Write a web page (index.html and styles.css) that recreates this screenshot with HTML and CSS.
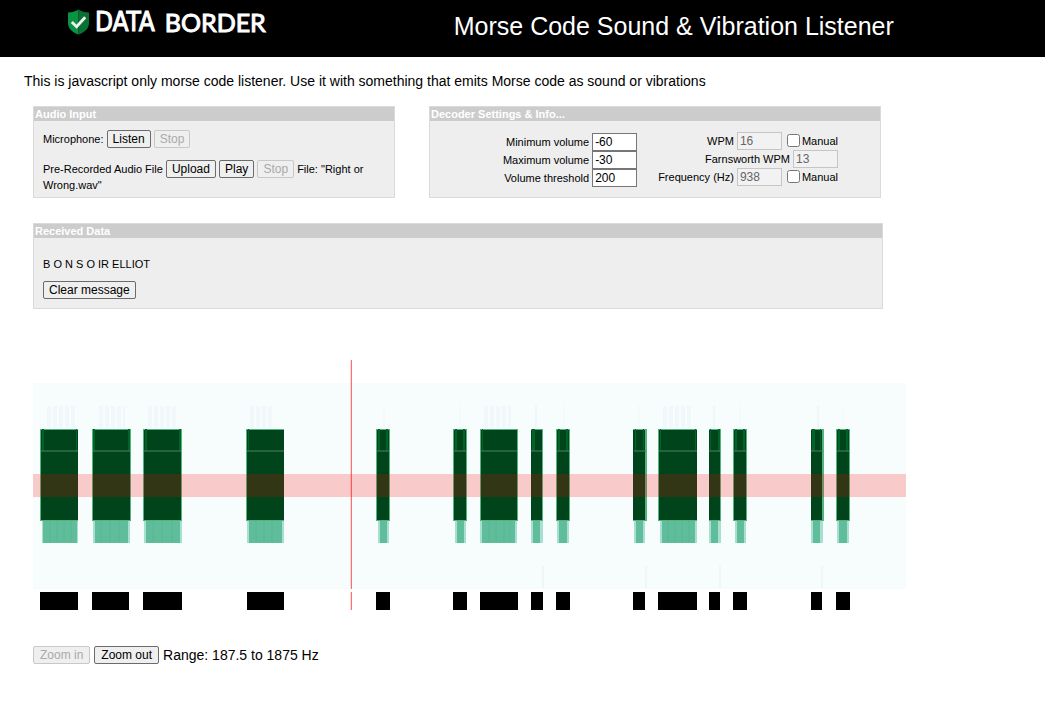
FILE: index.html
```html
<!DOCTYPE html>
<html lang="en">
<head>
<meta charset="utf-8">
<title>Morse Code Sound &amp; Vibration Listener</title>
<link rel="stylesheet" href="styles.css">
</head>
<body>
<header class="site-header">
  <a class="logo" href="#">
    <svg class="shield" viewBox="0 0 22 26" aria-hidden="true">
      <path d="M11 0C8 2 4 3 0 3V14C0 20 5 24 11 26Z" fill="#0b9344"/>
      <path d="M11 0C14 2 18 3 22 3V14C22 20 17 24 11 26Z" fill="#077332"/>
      <path d="M4 13L9 18L18 8" fill="none" stroke="#f2f2f2" stroke-width="3"/>
    </svg>
    <span class="logo-data">DATA</span>
    <span class="logo-border">BORDER</span>
  </a>
  <h1 class="page-title">Morse Code Sound &amp; Vibration Listener</h1>
</header>

<main class="content">
  <p class="intro">This is javascript only morse code listener. Use it with something that emits Morse code as sound or vibrations</p>

  <div class="workspace">
    <div class="panels">
      <section class="panel">
        <h2 class="panel-title">Audio Input</h2>
        <div class="panel-body audio">
          <p>Microphone: <button>Listen</button> <button disabled>Stop</button></p>
          <p>Pre-Recorded Audio File <button>Upload</button> <button>Play</button> <button disabled>Stop</button> File: "Right or Wrong.wav"</p>
        </div>
      </section>

      <section class="panel">
        <h2 class="panel-title">Decoder Settings &amp; Info...</h2>
        <div class="panel-body settings">
          <div class="fields">
            <div class="field"><label for="vmin">Minimum volume</label><input class="num" id="vmin" value="-60"></div>
            <div class="field"><label for="vmax">Maximum volume</label><input class="num" id="vmax" value="-30"></div>
            <div class="field"><label for="vthr">Volume threshold</label><input class="num" id="vthr" value="200"></div>
          </div>
          <div class="fields speed">
            <div class="field"><label for="wpm">WPM</label><input class="num" id="wpm" value="16" disabled><input class="tick" type="checkbox" id="wpm-m"><label for="wpm-m">Manual</label></div>
            <div class="field"><label for="fwpm">Farnsworth WPM</label><input class="num" id="fwpm" value="13" disabled></div>
            <div class="field"><label for="freq">Frequency (Hz)</label><input class="num" id="freq" value="938" disabled><input class="tick" type="checkbox" id="freq-m"><label for="freq-m">Manual</label></div>
          </div>
        </div>
      </section>
    </div>

    <section class="panel">
      <h2 class="panel-title">Received Data</h2>
      <div class="panel-body received">
        <p>B O N S O IR ELLIOT</p>
        <button>Clear message</button>
      </div>
    </section>

    <svg class="spectrogram" viewBox="0 0 873 250" role="img" aria-label="Spectrogram of the decoded audio">
      <rect class="backdrop" y="23" width="873" height="206"/>
      <path class="haze" d="M14 57h28M66 57h26M115 57h30M217 57h24M451 57h27M630 57h30"/>
      <path class="blip" d="M503 46v22M681 46v22M785 46v22M510 206v22M613 206v22M687 206v22M789 206v22"/>
      <path class="blip-faint" d="M351 46v22M427 46v22M531 46v22M606 46v22M707 46v22M810 46v22"/>
      <path class="tail-edge" d="M9 171h36M60 171h37M111 171h38M214 171h37M345 171h11M422 171h11M447 171h37M498 171h12M524 171h12M601 171h11M627 171h37M676 171h12M702 171h11M778 171h12M804 171h12"/>
      <path class="tail" d="M10 171h34M62 171h33M113 171h34M216 171h33M347 171h7M424 171h7M449 171h33M500 171h7M526 171h8M603 171h7M629 171h33M678 171h7M704 171h7M780 171h7M806 171h8"/>
      <path class="stripe" d="M17 160v22M24 160v22M31 160v22M38 160v22M68 160v22M77 160v22M86 160v22M120 160v22M129 160v22M139 160v22M223 160v22M231 160v22M239 160v22M456 160v22M463 160v22M471 160v22M477 160v22M635 160v22M642 160v22M649 160v22M656 160v22"/>
      <path class="tone-edge" d="M7 115h38M59 115h39M110 115h39M213 115h38M343 115h14M420 115h14M447 115h38M498 115h12M523 115h14M600 115h14M625 115h39M676 115h12M700 115h14M778 115h13M803 115h14"/>
      <path class="tone" d="M8 115h37M60 115h37M111 115h37M214 115h37M344 115h12M421 115h12M448 115h36M498 115h11M524 115h12M600 115h12M626 115h38M676 115h11M701 115h12M778 115h11M804 115h12"/>
      <path class="tone-soft" d="M9 80h2M43 80h1M60 80h2M95 80h2M112 80h2M146 80h2M215 80h1M345 80h2M353 80h2M422 80h2M430 80h2M449 80h1M499 80h3M525 80h2M533 80h2M602 80h1M610 80h1M627 80h1M662 80h1M677 80h1M685 80h2M702 80h2M710 80h2M779 80h3M787 80h1M805 80h2M813 80h2"/>
      <path class="divider" d="M8 91h37M60 91h37M111 91h37M214 91h37M344 91h12M421 91h12M448 91h36M498 91h11M524 91h12M601 91h12M626 91h38M676 91h11M701 91h12M778 91h12M804 91h12"/>
      <rect class="band" y="114" width="873" height="23"/>
      <path class="mark" d="M7 241h38M59 241h37M110 241h39M214 241h37M343 241h14M420 241h14M447 241h38M498 241h12M523 241h14M600 241h12M625 241h39M676 241h11M700 241h14M778 241h11M803 241h14"/>
      <path class="cursor" d="M318.3 0v229M318.3 232v18"/>
    </svg>

    <div class="zoom">
      <button disabled>Zoom in</button>
      <button>Zoom out</button>
      <span>Range: 187.5 to 1875 Hz</span>
    </div>
  </div>
</main>
</body>
</html>
```
FILE: styles.css
```css
* { box-sizing: border-box; }

body {
  margin: 0;
  background: #fff;
  color: #000;
  font: 14px/18px "Liberation Sans", Arial, sans-serif;
}

h1, h2, p { margin: 0; }

.site-header {
  display: flex;
  align-items: flex-start;
  gap: 188px;
  min-height: 57px;
  padding: 8px 24px 0 68px;
  background: #000;
  color: #fff;
}

.logo {
  display: flex;
  align-items: center;
  color: #fff;
  text-decoration: none;
  line-height: 28px;
  white-space: nowrap;
}

.shield { width: 21px; height: 26px; margin-right: 6px; }

.logo-data {
  margin-right: 10px;
  font: 26px/28px "DejaVu Sans Condensed", "DejaVu Sans", sans-serif;
  font-stretch: condensed;
  -webkit-text-stroke: 1px #fff;
}

.logo-border { font: 25px/26px Lato, sans-serif; -webkit-text-stroke: 1px #fff; }

.page-title { font-size: 25px; font-weight: normal; line-height: 36px; }

.content { padding: 15px 24px 24px; }

.workspace { padding: 16px 9px 0; }

.panels {
  display: grid;
  grid-template-columns: 362fr 452fr;
  gap: 34px;
  max-width: 848px;
  margin-bottom: 25px;
}

.panel {
  max-width: 850px;
  border: 1px solid #dadada;
  background: #eee;
  font-size: 11px;
  line-height: 15px;
}

.panel-title {
  padding: 0 1px;
  background: #ccc;
  color: #fff;
  font-size: 11px;
  line-height: 14px;
}

.panel-body { padding: 9px; }

.audio { padding-bottom: 5px; line-height: 14px; }

.audio p + p { margin-top: 12px; }

.settings {
  display: flex;
  justify-content: flex-end;
  gap: 21px;
  padding: 12px 42px 9px 9px;
}

.speed { margin-top: -1px; }

.field {
  display: flex;
  align-items: center;
  justify-content: flex-end;
  height: 18px;
}

.num {
  width: 45px;
  height: 18px;
  margin-left: 3px;
  padding: 1px 2px;
  border: 1px solid #767676;
  background: #fff;
  font: 12px "Liberation Sans", Arial, sans-serif;
}

.num:disabled { border-color: #c6c6c6; background: #f2f2f2; color: #666; }

.tick { width: 13px; height: 13px; margin: 0 2px 2px 5px; }

.received { padding-top: 19px; }

.received button { margin-top: 9px; }

button {
  height: 18px;
  padding: 0 5px;
  border: 1px solid #6b6b6b;
  border-radius: 2px;
  background: #efefef;
  color: #000;
  font: 12px/16px "Liberation Sans", Arial, sans-serif;
}

button:disabled { border-color: #c8c8c8; color: #aaa; }

.spectrogram {
  display: block;
  width: 100%;
  max-width: 873px;
  margin: 51px 0 36px;
}

.spectrogram path { fill: none; }
.backdrop { fill: #f7fdfd; }
.haze { stroke: #f1f8fb; stroke-width: 22; stroke-dasharray: 4 2; }
.blip { stroke: #edf6fb; stroke-width: 2; }
.blip-faint { stroke: #f3fafc; stroke-width: 2; }
.tail-edge { stroke: #a9dfd0; stroke-width: 24; }
.tail { stroke: #60bd9b; stroke-width: 24; }
.stripe { stroke: #57b891; stroke-width: 1; }
.tone-edge { stroke: #55b37f; stroke-width: 92; }
.tone { stroke: #00441b; stroke-width: 90; }
.tone-soft { stroke: #006428; stroke-width: 22; }
.divider { stroke: #4a8060; stroke-width: 1; }
.band { fill: #f00; fill-opacity: .2; }
.mark { stroke: #000; stroke-width: 18; }
.cursor { stroke: #f00; stroke-opacity: .7; stroke-width: 1; }

.zoom { display: flex; align-items: center; gap: 4px; }

.zoom button { padding: 0 6px; }
```
